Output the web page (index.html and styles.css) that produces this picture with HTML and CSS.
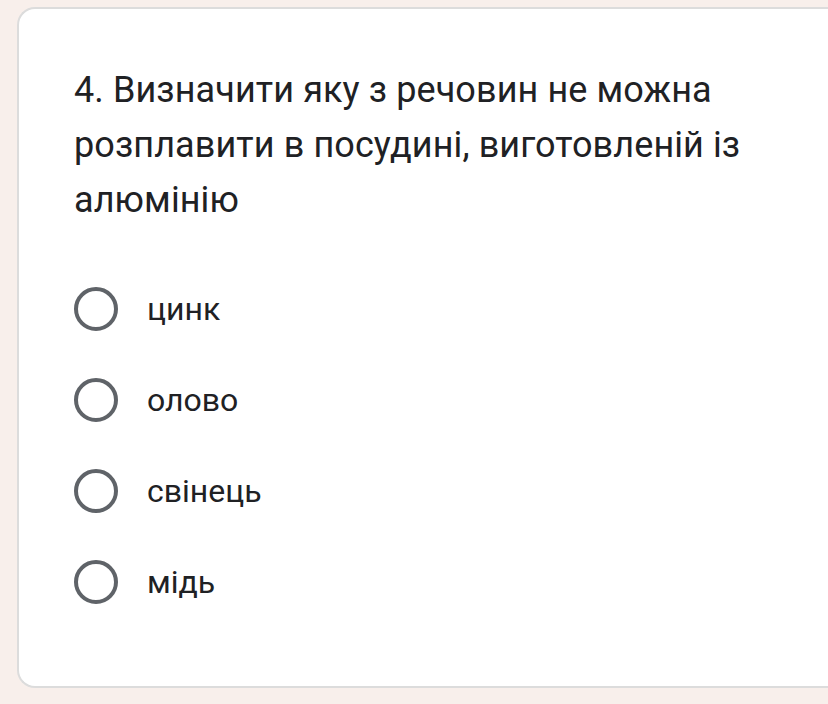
FILE: index.html
```html
<!DOCTYPE html>
<html lang="uk">
<head>
<meta charset="utf-8">
<link rel="stylesheet" href="styles.css">
</head>
<body>
<div class="page">
  <div class="card">
    <div class="title">4. Визначити яку з речовин не можна розплавити в посудині, виготовленій із алюмінію</div>
    <div class="options">
      <div class="option"><span class="radio"></span><span class="label">цинк</span></div>
      <div class="option"><span class="radio"></span><span class="label">олово</span></div>
      <div class="option"><span class="radio"></span><span class="label">свінець</span></div>
      <div class="option"><span class="radio"></span><span class="label">мідь</span></div>
    </div>
  </div>
</div>
</body>
</html>
```
FILE: styles.css
```css
html, body {
  margin: 0;
  padding: 0;
  background: #f8efeb;
  width: 828px;
  height: 704px;
  overflow: hidden;
}
.page {
  padding: 7px 0 0 17px;
}
.card {
  box-sizing: border-box;
  width: 840px;
  height: 681px;
  background: #ffffff;
  border: 2px solid #dcdcdc;
  border-right: none;
  border-radius: 18px 0 0 18px;
  padding: 54px 0 0 55px;
  font-family: Roboto, "Noto Sans", sans-serif;
  color: #202124;
}
.title {
  font-size: 36px;
  line-height: 55px;
  width: 720px;
  letter-spacing: 0.1px;
}
.options {
  margin-top: 59px;
  display: flex;
  flex-direction: column;
  gap: 47px;
}
.option {
  display: flex;
  align-items: center;
  height: 44px;
}
.radio {
  box-sizing: border-box;
  width: 44px;
  height: 44px;
  border: 4.5px solid #5f6368;
  border-radius: 50%;
  flex: none;
}
.label {
  margin-left: 29px;
  font-size: 32px;
}
```
